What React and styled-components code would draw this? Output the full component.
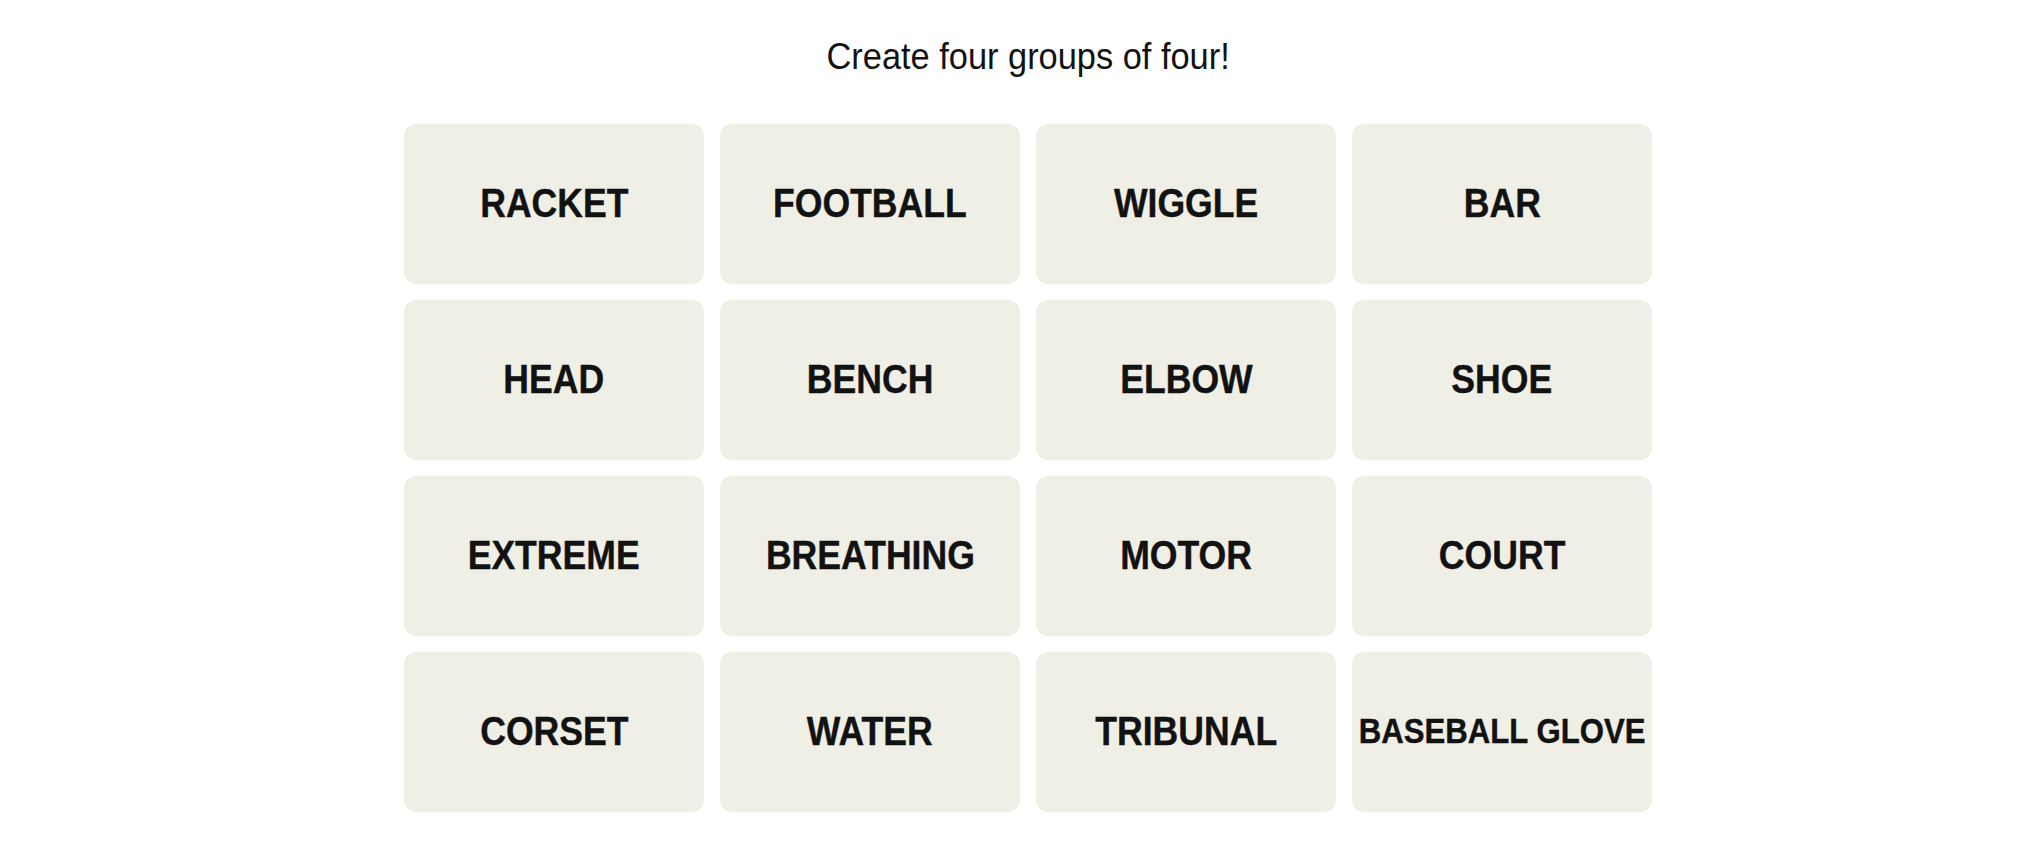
import styled, { createGlobalStyle } from "styled-components";

const GlobalStyle = createGlobalStyle`
  html, body {
    margin: 0;
    padding: 0;
    background: #ffffff;
  }
  body {
    font-family: "Liberation Sans", Arial, sans-serif;
    color: #121212;
  }
`;

const Page = styled.main`
  display: flex;
  flex-direction: column;
  align-items: center;
  padding: 33px 0 0 14px;
`;

// the face is squeezed a little to get the narrow headline look
const Prompt = styled.p`
  margin: 0;
  font-size: 36px;
  line-height: 48px;
  font-weight: 400;
  color: #121212;
  transform: scaleX(0.955);
`;

const Board = styled.div`
  margin-top: 43px;
  display: grid;
  grid-template-columns: repeat(4, 300px);
  grid-auto-rows: 160px;
  gap: 16px;
`;

const Tile = styled.button`
  display: flex;
  align-items: center;
  justify-content: center;
  border: none;
  border-radius: 12px;
  background: #efefe6;
  color: #121212;
  font-family: inherit;
  padding: 0;
  cursor: pointer;
`;

const Label = styled.span`
  display: inline-block;
  white-space: nowrap;
  font-weight: 700;
  font-size: ${(props) => (props.$long ? "35px" : "40px")};
  text-transform: uppercase;
  -webkit-text-stroke: 0.4px #121212;
  transform: translateY(-1px) scaleX(0.89);
`;

const words = [
  "Racket", "Football", "Wiggle", "Bar",
  "Head", "Bench", "Elbow", "Shoe",
  "Extreme", "Breathing", "Motor", "Court",
  "Corset", "Water", "Tribunal", "Baseball Glove",
];

const App = () => {
  return (
    <Page>
      <GlobalStyle />
      <Prompt>Create four groups of four!</Prompt>
      <Board>
        {words.map((word) => (
          <Tile key={word}>
            <Label $long={word.length > 10}>{word}</Label>
          </Tile>
        ))}
      </Board>
    </Page>
  );
};

export default App;
